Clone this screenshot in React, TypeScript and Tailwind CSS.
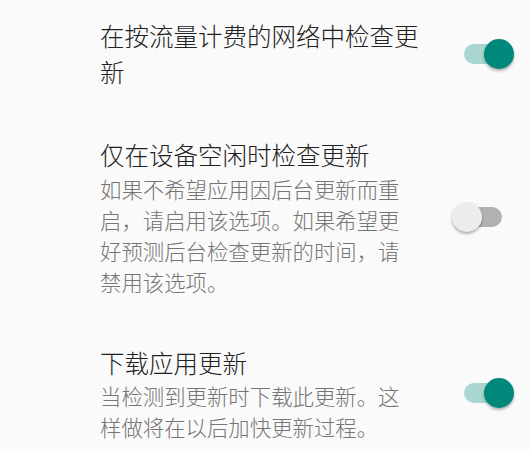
import React from 'react';

type Item = {
  title: string;
  summary?: string;
  checked: boolean;
  shift: string;
};

const items: Item[] = [
  { title: '在按流量计费的网络中检查更新', checked: true, shift: 'ml-[39.5px]' },
  {
    title: '仅在设备空闲时检查更新',
    summary: '如果不希望应用因后台更新而重启，请启用该选项。如果希望更好预测后台检查更新的时间，请禁用该选项。',
    checked: false,
    shift: 'ml-[32px]',
  },
  {
    title: '下载应用更新',
    summary: '当检测到更新时下载此更新。这样做将在以后加快更新过程。',
    checked: true,
    shift: 'ml-[39.5px]',
  },
];

const Toggle = ({ checked }: { checked: boolean }) => (
  <div className="relative w-[54px] h-[30px] shrink-0">
    <div
      className={
        checked
          ? 'absolute left-[4.5px] right-[4.5px] top-[5px] h-[20px] rounded-full bg-[#a9d6d1]'
          : 'absolute left-[4.5px] right-[4.5px] top-[5px] h-[20px] rounded-full bg-[#b1b1b1]'
      }
    />
    <div
      className={
        checked
          ? 'absolute right-0 top-0 w-[30px] h-[30px] rounded-full bg-[#00897b] shadow-[0_2px_3px_rgba(0,0,0,0.3)]'
          : 'absolute left-0 top-0 w-[30px] h-[30px] rounded-full bg-[#ececec] shadow-[0_2px_3px_rgba(0,0,0,0.3)]'
      }
    />
  </div>
);

export default function App() {
  return (
    <div
      className="w-[530px] h-[451px] overflow-hidden bg-[#fafafa]"
      style={{ fontFamily: '"Noto Sans CJK SC", Roboto, sans-serif' }}
    >
      <div className="-mt-[6px]">
        {items.map((item, i) => (
          <div className="flex items-center pl-[100px] py-6" key={i}>
            <div className="w-[320px] shrink-0">
              <div className="text-[24.5px] leading-[1.45] font-light text-[#212121]">{item.title}</div>
              {item.summary && (
                <div className="text-[21.4px] leading-[1.45] font-light text-[#757575]">{item.summary}</div>
              )}
            </div>
            <div className={item.shift}>
              <Toggle checked={item.checked} />
            </div>
          </div>
        ))}
      </div>
    </div>
  );
}
